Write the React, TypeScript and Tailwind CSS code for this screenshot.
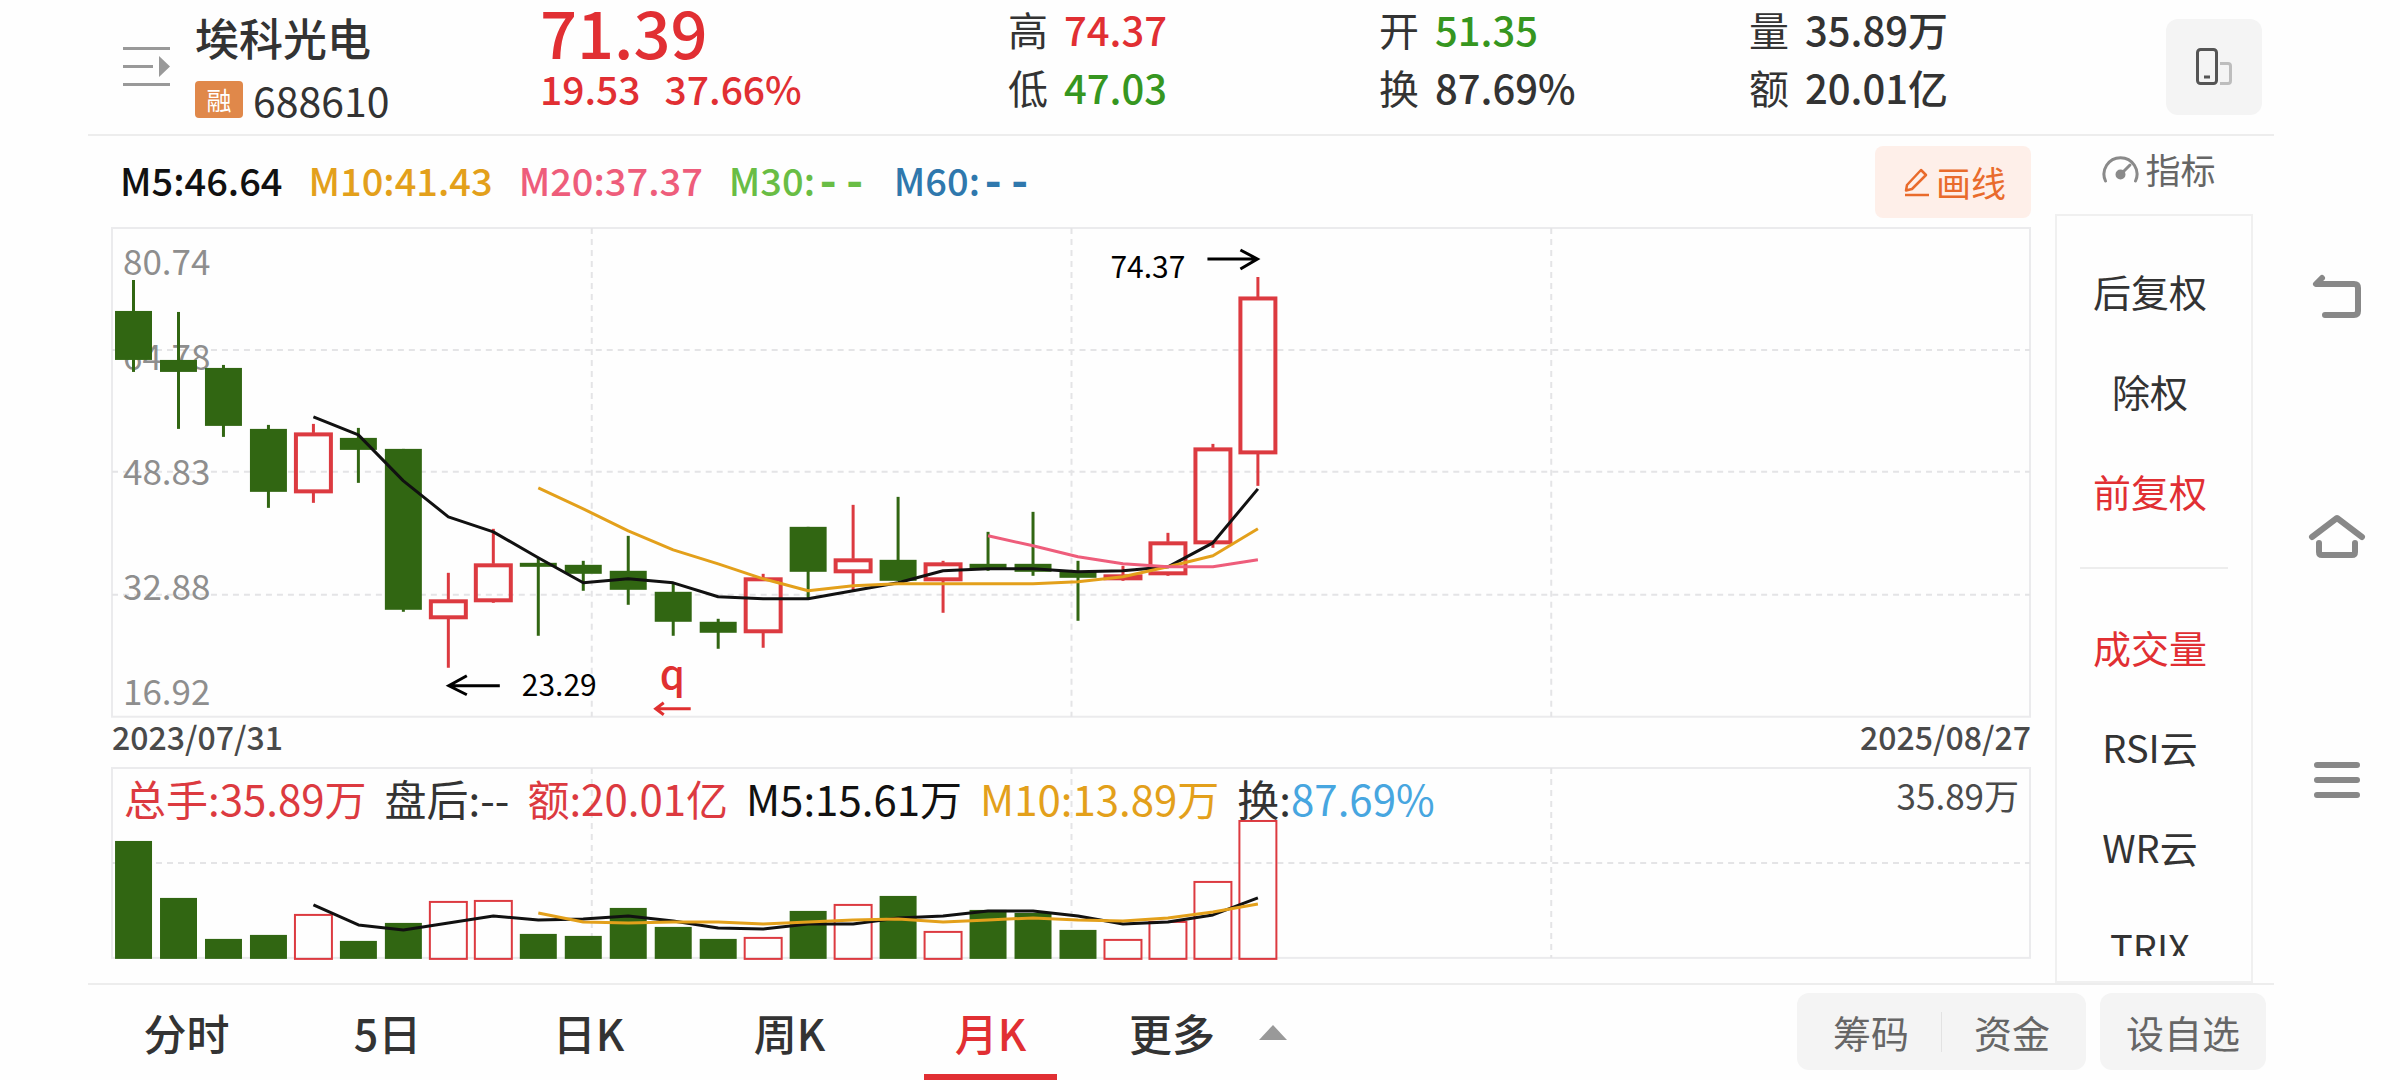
import React from "react";

type Candle = { up: boolean; high: number; top: number; bottom: number; low: number; vol: number };

const c = (kind: "r" | "g", high: number, top: number, bottom: number, low: number, vol: number): Candle => ({
  up: kind === "r",
  high,
  top,
  bottom,
  low,
  vol,
});

const candles: Candle[] = [
  c("g", 52, 83, 132, 144, 73),
  c("g", 84, 132, 144, 201, 130),
  c("g", 137, 140, 198, 209, 171),
  c("g", 197, 201, 264, 280, 167),
  c("r", 196, 205, 265, 275, 146),
  c("g", 200, 210, 222, 255, 173),
  c("g", 221, 221, 382, 384, 155),
  c("r", 345, 372, 391, 440, 133),
  c("r", 301, 336, 374, 375, 132),
  c("g", 330, 335, 339, 408, 166),
  c("g", 333, 337, 346, 363, 168),
  c("g", 308, 343, 362, 377, 140),
  c("g", 356, 364, 394, 408, 159),
  c("g", 391, 394, 405, 421, 171),
  c("r", 346, 350, 405, 420, 169),
  c("g", 299, 299, 344, 372, 143),
  c("r", 277, 331, 345, 363, 136),
  c("g", 269, 332, 353, 353, 128),
  c("r", 333, 335, 353, 385, 163),
  c("g", 304, 336, 341, 343, 142),
  c("g", 284, 336, 344, 348, 145),
  c("g", 333, 344, 350, 393, 162),
  c("r", 338, 347, 352, 353, 171),
  c("r", 305, 314, 347, 348, 153),
  c("r", 216, 220, 316, 320, 113),
  c("r", 49, 69, 226, 258, 52),
];

const STEP = 45;
const cx = (i: number) => 21.5 + STEP * i;
const points = (start: number, ys: number[]) => ys.map((y, k) => `${cx(start + k)},${y}`).join(" ");

const ma5 = [189, 207, 253, 289, 304, 330, 355, 351, 355, 369, 371, 371, 363, 355, 343, 341, 341, 344, 343, 339, 315, 261];
const ma10 = [260, 281, 303, 322, 336, 351, 363, 358, 356, 356, 356, 356, 354, 349, 339, 328, 301];
const ma20 = [308, 318, 329, 336, 339, 339, 332];
const volMa5 = [137, 157, 162, 155, 148, 152, 151, 148, 153, 160, 161, 156, 156, 150, 148, 143, 143, 148, 156, 154, 147, 130];
const volMa10 = [145, 154, 155, 154, 154, 156, 154, 152, 151, 154, 152, 150, 152, 153, 150, 144, 136];

const GREEN = "#316612";
const RED = "#dc3a40";
const GOLD = "#e3a01b";
const FONT = '"Noto Sans CJK SC", sans-serif';

function Grid({ height, rows }: { height: number; rows: number[] }) {
  return (
    <g fill="none" stroke="#e4e4e6" strokeWidth="2">
      <rect x="0" y="0" width="1919" height={height} stroke="#ebebed" />
      <g strokeDasharray="6 5">
        {rows.map((y) => (
          <line key={y} x1="0" x2="1919" y1={y} y2={y} />
        ))}
        {[480, 960, 1440].map((x) => (
          <line key={x} x1={x} x2={x} y1="0" y2={height} />
        ))}
      </g>
    </g>
  );
}

function PriceChart() {
  const axis: [string, number][] = [
    ["80.74", 47],
    ["64.78", 142],
    ["48.83", 257],
    ["32.88", 372],
    ["16.92", 477],
  ];
  return (
    <svg viewBox="0 0 1920 490" className="block h-auto w-full overflow-visible" role="img" aria-label="月K线图" fontFamily={FONT}>
      <Grid height={489} rows={[122, 244, 367]} />
      <g fill="#8e8e8e" fontSize="35">
        {axis.map(([label, y]) => (
          <text key={label} x="11" y={y}>
            {label}
          </text>
        ))}
      </g>
      {candles.map((k, i) => {
        const x = cx(i);
        const color = k.up ? RED : GREEN;
        return (
          <g key={i} stroke={color} strokeWidth="3" fill="none">
            {k.up ? (
              <>
                <line x1={x} x2={x} y1={k.high} y2={k.top} />
                <line x1={x} x2={x} y1={k.bottom} y2={k.low} />
                <rect x={x - 17.5} y={k.top + 1.5} width="35" height={k.bottom - k.top - 3} strokeWidth="4" />
              </>
            ) : (
              <>
                <line x1={x} x2={x} y1={k.high} y2={k.low} />
                <rect x={x - 18.5} y={k.top} width="37" height={k.bottom - k.top} fill={color} stroke="none" />
              </>
            )}
          </g>
        );
      })}
      <g fill="none" strokeWidth="3" strokeLinejoin="round">
        <polyline points={points(4, ma5)} stroke="#111" />
        <polyline points={points(9, ma10)} stroke={GOLD} />
        <polyline points={points(19, ma20)} stroke="#ee5d7b" />
      </g>
      <g fill="none" stroke="#000" strokeWidth="3">
        <path d="M1096 31H1146M1129 22L1146 31L1129 41" />
        <path d="M388 458H337M355 448L337 458L355 467" />
        <path d="M579 481H544M552 475L544 481L552 487" stroke="#e03030" />
      </g>
      <g fill="#000" fontSize="30">
        <text x="999" y="50">74.37</text>
        <text x="410" y="468">23.29</text>
        <text x="548" y="461" fontSize="40" fontWeight="500" fill="#e03030">q</text>
      </g>
    </svg>
  );
}

function VolumeChart() {
  return (
    <svg viewBox="0 0 1920 192" className="block h-auto w-full overflow-visible" role="img" aria-label="成交量图">
      <Grid height={190} rows={[95]} />
      {candles.map((k, i) =>
        k.up ? (
          <rect key={i} x={cx(i) - 18.5} y={k.vol + 1} width="37" height={190 - k.vol} fill="none" stroke={RED} strokeWidth="2" />
        ) : (
          <rect key={i} x={cx(i) - 18.5} y={k.vol} width="37" height={191 - k.vol} fill={GREEN} />
        )
      )}
      <g fill="none" strokeWidth="3" strokeLinejoin="round">
        <polyline points={points(4, volMa5)} stroke="#111" />
        <polyline points={points(9, volMa10)} stroke={GOLD} />
      </g>
    </svg>
  );
}

function Dashes() {
  return <span className="font-['Liberation_Mono'] text-[44px] leading-none font-bold">--</span>;
}

function Stat({ label, value, color = "text-[#333]" }: { label: string; value: string; color?: string }) {
  return (
    <div className="flex gap-4 text-[40px] leading-[58px]">
      <dt>{label}</dt>
      <dd className={`font-medium ${color}`}>{value}</dd>
    </div>
  );
}

function Header() {
  return (
    <header className="flex h-34 items-start border-b-2 border-[#ededed]">
      <div className="flex w-[452px] pl-[35px]">
        <button type="button" aria-label="展开列表" className="mt-[47px] h-[40px]">
          <svg width="48" height="40" viewBox="0 0 48 40" fill="#999">
            <path d="M0 0H47V3H0zM0 18H30V21H0zM0 36H47V39H0zM36 9L47 19.500L36 30z" />
          </svg>
        </button>
        <div className="pl-6">
          <h1 className="pt-2 text-[44px] leading-[58px] font-medium">埃科光电</h1>
          <div className="flex items-center gap-2.5">
            <span className="flex h-[37px] w-12 items-center justify-center rounded-sm bg-[#e0884a] text-[25px] leading-none text-white">融</span>
            <span className="text-[41px] leading-[66px]">688610</span>
          </div>
        </div>
      </div>
      <div className="w-[468px] text-[#e12f33]">
        <div className="text-[65px] leading-[62px] font-medium">71.39</div>
        <div className="flex gap-6 text-[39px] leading-[52px] font-medium">
          <span>19.53</span>
          <span>37.66%</span>
        </div>
      </div>
      <dl className="w-[371px]">
        <Stat label="高" value="74.37" color="text-[#e12f33]" />
        <Stat label="低" value="47.03" color="text-[#369620]" />
      </dl>
      <dl className="w-[370px]">
        <Stat label="开" value="51.35" color="text-[#369620]" />
        <Stat label="换" value="87.69%" />
      </dl>
      <dl>
        <Stat label="量" value="35.89万" />
        <Stat label="额" value="20.01亿" />
      </dl>
      <button type="button" aria-label="切换竖屏" className="mt-[19px] mr-3 ml-auto flex h-24 w-24 items-center justify-center rounded-xl bg-[#f4f4f4]">
        <svg width="36" height="38" viewBox="0 0 36 38" fill="none" strokeWidth="3">
          <rect x="1.500" y="1.500" width="19" height="34" rx="3" stroke="#555" />
          <path d="M8 29H14" stroke="#555" />
          <path d="M24 15.500H32Q34.500 15.500 34.500 18V33Q34.500 35.500 32 35.500H24" stroke="#bdbdbd" />
        </svg>
      </button>
    </header>
  );
}

function SideItem({ label, active = false }: { label: string; active?: boolean }) {
  return (
    <li>
      <button type="button" className={`block h-25 w-full pr-2 text-center text-[38px] ${active ? "text-[#e12f33]" : ""}`}>
        {label}
      </button>
    </li>
  );
}

function SidePanel() {
  return (
    <aside className="flex w-[198px] flex-none flex-col">
      <button type="button" className="flex h-[78px] items-center justify-center gap-1.5 pb-3 pl-2.5 text-[35px] text-[#666]">
        <svg width="37" height="30" viewBox="0 0 37 30" fill="none" stroke="#8a8a8a" strokeWidth="3" strokeLinecap="round">
          <path d="M3.500 27A16.500 16.500 0 1 1 33.500 27" />
          <path d="M19 20L28 11" />
          <circle cx="18.500" cy="20.500" r="3.500" fill="#8a8a8a" />
        </svg>
        指标
      </button>
      <div className="flex-1 border-2 border-[#f0f0f0]">
        <div className="mb-[25px] h-[740px] overflow-y-auto pt-6 [scrollbar-width:none]">
          <ul>
            <SideItem label="后复权" />
            <SideItem label="除权" />
            <SideItem label="前复权" active />
          </ul>
          <hr className="mx-[23px] my-[27px] border-t-2 border-[#ededed]" />
          <ul>
            <SideItem label="成交量" active />
            <SideItem label="RSI云" />
            <SideItem label="WR云" />
            <SideItem label="TRIX" />
          </ul>
        </div>
      </div>
    </aside>
  );
}

function ChartColumn() {
  return (
    <section className="min-w-0 flex-1">
      <div className="flex h-23 items-center justify-between">
        <div className="flex items-baseline gap-[26px] pl-2 text-[38px] leading-[44px] font-medium">
          <span className="text-[#111]">M5:46.64</span>
          <span className="text-[#e3a01b]">M10:41.43</span>
          <span className="text-[#ee5d7b]">M20:37.37</span>
          <span className="text-[#69bd45]">M30:<Dashes /></span>
          <span className="text-[#2f78ad]">M60:<Dashes /></span>
        </div>
        <button type="button" className="flex h-18 w-39 items-center justify-center gap-1.5 rounded-lg bg-[#feefe9] pl-1 text-[35px] text-[#e96b2c]">
          <svg width="26" height="30" viewBox="0 0 26 30" fill="none" stroke="#e96b2c" strokeWidth="2.500" strokeLinejoin="round">
            <path d="M3 18L17 3L22 8L8 22L2 23.500Z" />
            <path d="M1 28H25" />
          </svg>
          画线
        </button>
      </div>
      <PriceChart />
      <div className="flex h-[50px] justify-between text-[32px] leading-[36px] font-medium text-[#4a4a4a]">
        <time dateTime="2023-07-31">2023/07/31</time>
        <time dateTime="2025-08-27">2025/08/27</time>
      </div>
      <div className="relative">
        <VolumeChart />
        <div className="absolute inset-x-0 top-0 flex gap-[18px] px-3 text-[42px] leading-[60px] text-[#333]">
          <span className="text-[#dc3a40]">总手:35.89万</span>
          <span>盘后:--</span>
          <span className="text-[#dc3a40]">额:20.01亿</span>
          <span className="text-[#111]">M5:15.61万</span>
          <span className="text-[#e3a01b]">M10:13.89万</span>
          <span>
            换:<span className="text-[#47a6e0]">87.69%</span>
          </span>
          <span className="ml-auto text-[35px] leading-[54px] text-[#4a4a4a]">35.89万</span>
        </div>
      </div>
    </section>
  );
}

function Footer() {
  const tabs = ["分时", "5日", "日K", "周K", "月K"];
  return (
    <footer className="flex h-[97px] items-start border-t-2 border-[#ededed]">
      <nav className="flex text-[43px] font-medium">
        {tabs.map((t) => (
          <button
            key={t}
            type="button"
            className={t === "月K" ? "relative h-[95px] w-[201px] pr-1 text-[#e12f33]" : "h-[95px] w-[201px] pr-1"}
          >
            {t}
            {t === "月K" && <span className="absolute right-9 bottom-0 left-8 h-1.5 bg-[#e12f33]" />}
          </button>
        ))}
        <button type="button" className="flex h-[95px] items-center gap-11 pl-9">
          更多
          <svg width="28" height="15" viewBox="0 0 28 15" fill="#999">
            <path d="M14 0L28 15H0z" />
          </svg>
        </button>
      </nav>
      <div className="mt-2 mr-2 ml-auto flex gap-3.5 text-[38px] text-[#666]">
        <div className="flex h-[77px] items-center rounded-xl bg-[#f4f4f4]">
          <button type="button" className="h-full w-36 pl-1">筹码</button>
          <span className="h-10 w-px bg-[#e2e2e2]" />
          <button type="button" className="h-full w-36 pr-1">资金</button>
        </div>
        <button type="button" className="h-[77px] w-[166px] rounded-xl bg-[#f4f4f4]">设自选</button>
      </div>
    </footer>
  );
}

function SystemNav() {
  return (
    <nav className="flex w-[126px] flex-none flex-col items-center pt-[272px]">
      <button type="button" aria-label="返回">
        <svg width="60" height="50" viewBox="0 0 60 50" fill="none" stroke="#888" strokeWidth="6" strokeLinecap="round" strokeLinejoin="round">
          <path d="M15 6L9 12H47Q51 12 51 16V39Q51 43 47 43H18" />
        </svg>
      </button>
      <button type="button" aria-label="主页" className="mt-[190px]">
        <svg width="60" height="50" viewBox="0 0 60 50" fill="none" stroke="#888" strokeWidth="6" strokeLinecap="round" strokeLinejoin="round">
          <path d="M5 25L30 6L55 25M12 31V40Q12 43 15 43H45Q48 43 48 40V31" />
        </svg>
      </button>
      <button type="button" aria-label="菜单" className="mt-[193px]">
        <svg width="60" height="50" viewBox="0 0 60 50" stroke="#888" strokeWidth="6" strokeLinecap="round">
          <path d="M10 10H50M10 25H50M10 40H50" />
        </svg>
      </button>
    </nav>
  );
}

export default function App() {
  return (
    <div className="flex bg-[#fefefe] pl-22 font-['Noto_Sans_CJK_SC',sans-serif] text-[#333]">
      <main className="min-w-0 flex-1">
        <Header />
        <div className="flex gap-6 pr-[21px] pl-6">
          <ChartColumn />
          <SidePanel />
        </div>
        <Footer />
      </main>
      <SystemNav />
    </div>
  );
}
